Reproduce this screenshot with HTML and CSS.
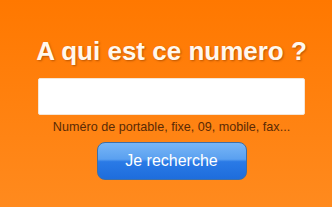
FILE: index.html
```html
<!DOCTYPE html>
<html lang="fr">
<head>
    <meta charset="UTF-8">
    <title>A qui est ce numero ?</title>
    <link rel="stylesheet" href="styles.css">
</head>
<body>
    <div class="search-box">
        <h1 class="title">A qui est ce numero ?</h1>
        <input type="text" class="number-input">
        <div class="hint">Numéro de portable, fixe, 09, mobile, fax...</div>
        <button class="search-btn">Je recherche</button>
    </div>
</body>
</html>
```
FILE: styles.css
```css
html, body {
    margin: 0;
    height: 100%;
}

body {
    background: linear-gradient(to bottom, #ff7800, #ff8a1e);
    font-family: "Liberation Sans", Arial, sans-serif;
}

.search-box {
    display: flex;
    flex-direction: column;
    align-items: center;
    width: 267px;
    margin-left: 38px;
    padding-top: 36px;
}

.title {
    margin: 0;
    font-size: 26px;
    font-weight: bold;
    line-height: 30px;
    color: #fff8ee;
    text-shadow: 1px 1px 2px rgba(140, 60, 0, 0.6);
    white-space: nowrap;
}

.number-input {
    box-sizing: border-box;
    width: 267px;
    height: 37px;
    margin-top: 12px;
    border: 1px solid #f5e6d6;
    border-radius: 2px;
    background: #fff;
}

.hint {
    margin-top: 4px;
    font-size: 12.6px;
    line-height: 16px;
    color: #5a2a05;
    white-space: nowrap;
}

.search-btn {
    box-sizing: border-box;
    width: 150px;
    height: 38px;
    margin-top: 7px;
    border: 1px solid #3d6fa8;
    border-radius: 8px;
    background: linear-gradient(to bottom, #78b6f6 0%, #5aa0f0 45%, #2a7ae6 52%, #1e6ddc 100%);
    color: #fff;
    font-family: "Liberation Sans", Arial, sans-serif;
    font-size: 16px;
    cursor: pointer;
}
```
